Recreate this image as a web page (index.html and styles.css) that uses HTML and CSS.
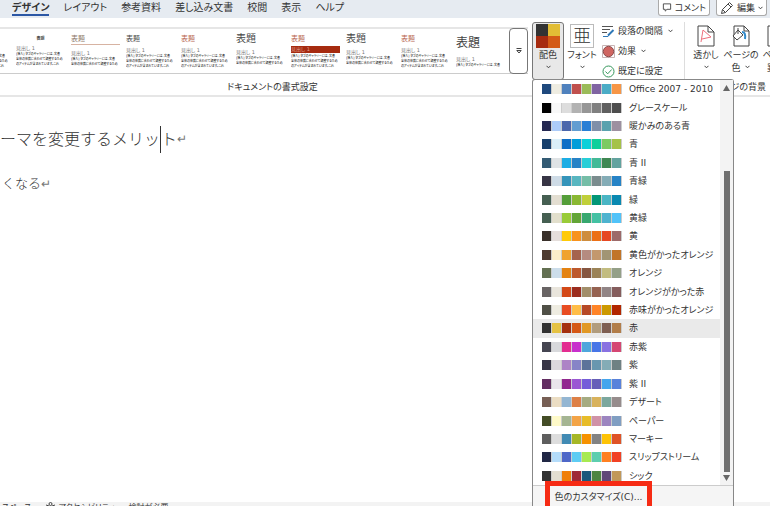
FILE: index.html
```html
<!DOCTYPE html>
<html lang="ja">
<head>
<meta charset="utf-8">
<title>デザイン</title>
<link rel="stylesheet" href="styles.css">
</head>
<body>
<header class="tabs">
  <nav class="tab-list">
    <a class="tab active" href="#design">デザイン</a>
    <a class="tab" href="#layout">レイアウト</a>
    <a class="tab" href="#references">参考資料</a>
    <a class="tab" href="#mailings">差し込み文書</a>
    <a class="tab" href="#review">校閲</a>
    <a class="tab" href="#view">表示</a>
    <a class="tab" href="#help">ヘルプ</a>
  </nav>
  <div class="actions">
    <button class="action" type="button">
      <svg width="10" height="11" viewBox="0 0 11 11"><path d="M1.500 1.500h8v6h-4l-2 2v-2h-2z"/></svg>コメント
    </button>
    <button class="action" type="button">
      <svg width="14" height="14" viewBox="0 0 14 14"><path d="M1.500 12.500l1-4 7-7 3 3-7 7zM8 3l3 3M2.500 8.500l3 3"/></svg>編集
      <svg class="chev" width="5" height="4" viewBox="0 0 5 4"><path d="M.5.8l2 2 2-2"/></svg>
    </button>
  </div>
</header>

<section class="ribbon">
  <div class="group formats">
    <div class="gallery">
      <div class="styles" id="styles"></div>
      <button class="more" type="button" aria-label="その他">
        <svg width="6" height="6" viewBox="0 0 6 6"><path d="M.5.5h5M.8 2.500h4.400L3 5z"/></svg>
      </button>
    </div>
    <button class="big pressed" type="button">
      <svg width="24" height="24" viewBox="0 0 24 24"><g stroke="none"><path fill="#333" d="M0 0h12v12H0z"/><path fill="#e2bd35" d="M12 0h12v12H12z"/><path fill="#a62b10" d="M0 12h12v12H0z"/><path fill="#d35a16" d="M12 12h12v12H12z"/></g></svg>
      <span>配色</span>
      <svg class="chev" width="5" height="4" viewBox="0 0 5 4"><path d="M.5.8l2 2 2-2"/></svg>
    </button>
    <button class="big" type="button">
      <span class="font-icon">亜</span>
      <span>フォント</span>
      <svg class="chev" width="5" height="4" viewBox="0 0 5 4"><path d="M.5.8l2 2 2-2"/></svg>
    </button>
    <div class="stack">
      <button class="small" type="button">
        <svg width="13" height="13" viewBox="0 0 13 13"><path stroke="#555" d="M0 1.500h11M0 4.500h8M0 7.500h5"/><path stroke="#2f78b7" stroke-width="2" d="M11.500 5L6 10.500"/><path stroke="#2f78b7" d="M1 11.500h5l1-2"/></svg>段落の間隔
        <svg class="chev" width="5" height="4" viewBox="0 0 5 4"><path d="M.5.8l2 2 2-2"/></svg>
      </button>
      <button class="small" type="button">
        <svg width="13" height="13" viewBox="0 0 13 13"><path stroke="#c9b5b5" d="M.5.5h12v12H.5z"/><circle cx="6.500" cy="6.500" r="5.200" fill="#cf6560" stroke="#8b4d4d"/></svg>効果
        <svg class="chev" width="5" height="4" viewBox="0 0 5 4"><path d="M.5.8l2 2 2-2"/></svg>
      </button>
      <button class="small" type="button">
        <svg width="13" height="13" viewBox="0 0 13 13"><g stroke="#35975b"><circle cx="6.500" cy="6.500" r="5.500"/><path d="M3.500 6.500l2.200 2.300 4-4.300"/></g></svg>既定に設定
      </button>
    </div>
    <div class="group-label">ドキュメントの書式設定</div>
  </div>
  <div class="group background">
    <button class="big" type="button">
      <svg width="18" height="24" viewBox="0 0 18 24"><path fill="#fff" d="M1 2h10l6 6v14H1z"/><path d="M11 2v6h6"/><path stroke="#ee6f7c" d="M4 18L6 6l8 7-9 2"/></svg>
      <span>透かし</span>
      <svg class="chev" width="5" height="4" viewBox="0 0 5 4"><path d="M.5.8l2 2 2-2"/></svg>
    </button>
    <button class="big" type="button">
      <svg width="18" height="24" viewBox="0 0 18 24"><path fill="#fff" d="M2 2h10l5 5v15H2z"/><path d="M12 2v5h5"/><path stroke="#338bcb" stroke-width="2" d="M10 8q4 0 3 7"/><path fill="#fff" d="M6 6l5 5-6 5-4-4zM6 10V4"/></svg>
      <span>ページの</span>
      <span class="second">色 <svg class="chev" width="5" height="4" viewBox="0 0 5 4"><path d="M.5.8l2 2 2-2"/></svg></span>
    </button>
    <button class="big" type="button">
      <svg width="18" height="24" viewBox="0 0 18 24"><path fill="#fff" d="M1 2h10l6 6v14H1z"/></svg>
      <span>ページ</span>
      <span class="second">罫線</span>
    </button>
    <div class="group-label">ページの背景</div>
  </div>
</section>

<main class="document">
  <h1>ーマを変更するメリッ<span class="caret"></span>ト<span class="mark">↵</span></h1>
  <p>くなる<span class="mark">↵</span></p>
</main>

<footer class="status">
  <span>スペース</span>
  <span class="access"><svg width="11" height="11" viewBox="0 0 11 11"><circle cx="5.500" cy="2" r="1.500"/><path d="M1 3l3 1v3l-1 3.500M10 3L7 4v3l1 3.500"/></svg>アクセシビリティ</span>
  <span>検討が必要</span>
</footer>

<div class="menu">
  <div class="menu-body">
    <div class="schemes" id="schemes"></div>
    <div class="scroll">
      <svg width="7" height="6" viewBox="0 0 7 6"><path d="M3.500 0L7 6H0z"/></svg>
      <div class="track"><div class="thumb"></div></div>
      <svg width="7" height="6" viewBox="0 0 7 6"><path d="M0 0h7L3.500 6z"/></svg>
    </div>
  </div>
  <div class="menu-foot"><button class="customize" type="button">色のカスタマイズ(C)...</button></div>
</div>
<script src="script.js"></script>
</body>
</html>
```
FILE: styles.css
```css
* { box-sizing: border-box; }
body {
  margin: 0;
  height: 100vh;
  overflow: hidden;
  display: flex;
  flex-direction: column;
  position: relative;
  background: #fff;
  color: #333;
  font: 9px/14px "DejaVu Sans", "Noto Sans CJK JP", sans-serif;
  font-feature-settings: "palt";
}
button {
  font: inherit;
  font-feature-settings: inherit;
  color: inherit;
  background: none;
  border: 0;
  padding: 0;
  margin: 0;
  white-space: nowrap;
}
svg { fill: none; stroke: #444; flex: none; }

.tabs {
  height: 18px;
  flex: none;
  display: flex;
  justify-content: space-between;
  background: #e6ebf1;
}
.tab-list { display: flex; gap: 14px; padding-left: 12px; }
.tab {
  height: 16px;
  line-height: 15px;
  font-size: 10px;
  color: #333;
  text-decoration: none;
  white-space: nowrap;
}
.tab.active { font-weight: 700; border-bottom: 2px solid #2b57a5; }
.actions { display: flex; gap: 6px; padding-right: 3px; }
.action {
  height: 16px;
  display: flex;
  align-items: center;
  gap: 3px;
  padding: 0 3px;
  background: #fff;
  border: 1px solid #aaa;
  border-top: 0;
  border-radius: 0 0 3px 3px;
}

.ribbon {
  height: 79px;
  flex: none;
  display: flex;
  border-bottom: 2px solid #e6e6e6;
}
.group {
  position: relative;
  display: flex;
  align-items: flex-start;
  padding: 4px 0 16px;
}
.formats { flex: 1; min-width: 0; }
.formats::after {
  content: "";
  align-self: stretch;
  width: 1px;
  background: #ddd;
}
.group-label {
  position: absolute;
  bottom: 1px;
  left: 0;
  right: 0;
  text-align: center;
  white-space: nowrap;
}
.formats .group-label { right: 140px; }
.background { width: 85px; padding-left: 5px; overflow: hidden; gap: 3px; }
.background .group-label { right: 4px; text-align: right; }

.gallery {
  flex: 1;
  min-width: 0;
  height: 47px;
  margin: 5px 4px 0 0;
  display: flex;
  border-top: 2px solid #e6e6e6;
  border-bottom: 1px solid #ccc;
}
.styles { flex: 1; min-width: 0; display: flex; gap: 6px; overflow: hidden; margin-left: -39px; }
.style {
  width: 49px;
  flex: none;
  height: 42px;
  overflow: hidden;
  padding-top: 5px;
  font-size: 5px;
  line-height: 6px;
  color: #444;
}
.style b { display: block; font-weight: 400; font-size: 7px; line-height: 10px; margin-bottom: 3px; }
.style i { display: block; font-style: normal; line-height: 7px; color: #777; }
.style p { margin: 0; font-size: 3px; line-height: 5px; color: #000; }
.style.centered b { font-size: 4px; font-weight: 700; text-align: center; margin-bottom: 1px; }
.style.ruled b { border-bottom: 1px solid #d7b3a2; color: #8c7769; margin-bottom: 5px; }
.style.red b { color: #b86550; }
.style.large b { font-size: 10px; margin-bottom: 5px; }
.style.bar b { color: #b86550; margin-bottom: 2px; }
.style.bar i { background: #a62b10; color: #e0a090; margin-bottom: 1px; }
.style.huge b { font-size: 12px; line-height: 18px; margin-bottom: 4px; }
.more {
  width: 19px;
  height: 46px;
  flex: none;
  margin-top: -1px;
  border: 1px solid #777;
  border-radius: 4px;
  background: #fff;
}

.big {
  width: 32px;
  height: 58px;
  flex: none;
  display: flex;
  flex-direction: column;
  align-items: center;
  padding-top: 2px;
}
.big > span { line-height: 13px; }
.big > svg:first-child { margin-bottom: 1px; }
.big .chev { margin-top: 3px; }
.big .second .chev { margin: 0 0 2px 2px; }
.pressed { padding-top: 1px; border: 1px solid #777; border-radius: 3px; background: #e8e8e8; margin-right: 2px; }
.big .font-icon {
  width: 24px;
  height: 24px;
  border: 1px solid #bbb;
  font-size: 18px;
  line-height: 22px;
  font-weight: 300;
  text-align: center;
  margin-bottom: 1px;
}
.stack { width: 82px; flex: none; margin-left: 4px; display: flex; flex-direction: column; gap: 6px; padding-top: 2px; }
.small { height: 14px; display: flex; align-items: center; gap: 3px; }
.small .chev { margin-left: 2px; }

.document { flex: 1; padding: 29px 0 0; }
.document h1 {
  margin: 0;
  font-size: 16px;
  line-height: 27px;
  font-weight: 300;
  font-feature-settings: normal;
  display: flex;
  align-items: center;
}
.document p { margin: 19px 0 0 2px; font-size: 13px; line-height: 24px; font-weight: 300; font-feature-settings: normal; }
.caret { width: 1px; height: 27px; background: #333; }
.mark { font-size: 12px; color: #777; }

.status {
  height: 4px;
  flex: none;
  overflow: hidden;
  display: flex;
  gap: 14px;
  padding-left: 2px;
  background: #f3f3f3;
  font-size: 8px;
  line-height: 12px;
}
.access { display: flex; gap: 2px; }

.menu {
  position: absolute;
  left: calc(100% - 238px);
  top: 79px;
  bottom: 0;
  width: 202px;
  display: flex;
  flex-direction: column;
  background: #fff;
  border: 1px solid #888;
  border-bottom: 0;
  border-radius: 3px 3px 0 0;
}
.menu-body { flex: 1; display: flex; min-height: 0; }
.schemes { flex: 1; min-width: 0; display: flex; flex-direction: column; }
.scheme {
  flex: 1;
  min-height: 0;
  display: flex;
  align-items: center;
  gap: 7px;
  padding-left: 9px;
  text-align: left;
}
.scheme.selected { background: #eaeaea; }
.swatches { display: flex; flex: none; width: 80px; height: 10px; }
.swatch { flex: 1; border-right: 1px solid #ccc; }
.scroll {
  width: 13px;
  flex: none;
  display: flex;
  flex-direction: column;
  align-items: center;
  padding: 5px 0 4px;
  background: #f3f3f3;
}
.scroll svg { fill: #666; stroke: none; }
.track { flex: 1; display: flex; flex-direction: column; justify-content: flex-end; padding-bottom: 3px; }
.thumb { width: 6px; height: 79%; background: #707070; }
.menu-foot { height: 21px; flex: none; border-top: 1px solid #ccc; background: #f5f5f5; }
.customize {
  position: absolute;
  left: 12px;
  bottom: -5px;
  width: 107px;
  height: 30px;
  padding-top: 2px;
  border: 5px solid #f62b14;
  background: #f5f5f5;
}
```
FILE: script.js
```js
const schemes = [
  ["Office 2007 - 2010", "#1f497d #eeece1 #4f81bd #c0504d #9bbb59 #8064a2 #4bacc6 #f79646"],
  ["グレースケール", "#000000 #f8f8f8 #dddddd #b2b2b2 #969696 #808080 #5f5f5f #4d4d4d"],
  ["暖かみのある青", "#242852 #accbf9 #4a66ac #629dd1 #297fd5 #7f8fa9 #5aa2ae #9d90a0"],
  ["青", "#17406d #dbeff9 #0f6fc6 #009dd9 #0bd0d9 #10cf9b #7cca62 #a5c249"],
  ["青 II", "#335b74 #dfe3e5 #1cade4 #2683c6 #27ced7 #42ba97 #3e8853 #62a39f"],
  ["青緑", "#373545 #cedbe6 #3494ba #58b6c0 #75bda7 #7a8c8e #84acb6 #2683c6"],
  ["緑", "#455f51 #e3ded1 #549e39 #8ab833 #c0cf3a #029676 #4ab5c4 #0989b1"],
  ["黄緑", "#455f51 #e2dfcc #99cb38 #63a537 #37a76f #44c1a3 #4eb3cf #51c3f9"],
  ["黄", "#39302a #e5dedb #ffca08 #f8931d #ce8d3e #ec7016 #e64823 #9c6a6a"],
  ["黄色がかったオレンジ", "#4e3b30 #fbeec9 #f0a22e #a5644e #b58b80 #c3986d #a19574 #c17529"],
  ["オレンジ", "#637052 #ccddea #e48312 #bd582c #865640 #9b8357 #c2bc80 #94a088"],
  ["オレンジがかった赤", "#696464 #e9e5dc #d34817 #9b2d1f #a28e6a #956251 #918485 #855d5d"],
  ["赤味がかったオレンジ", "#505046 #eeece1 #e84c22 #ffbd47 #b64926 #ff8427 #cc9900 #b22600"],
  ["赤", "#323232 #e5c243 #a5300f #d55816 #e19825 #b19c7d #7f5f52 #b27d49"],
  ["赤紫", "#454551 #d8d9dc #e32d91 #c830cc #4ea6dc #4775e7 #8971e1 #d54773"],
  ["紫", "#373545 #dcd8dc #ad84c6 #8784c7 #5d739a #6997af #84acb6 #6f8183"],
  ["紫 II", "#632e62 #eae5eb #92278f #9b57d3 #755dd9 #665eb8 #45a5ed #5982db"],
  ["デザート", "#775f55 #ebddc3 #94b6d2 #dd8047 #a5ab81 #d8b25c #7ba79d #968c8c"],
  ["ペーパー", "#444d26 #fefac9 #a5b592 #f3a447 #e7bc29 #d092a7 #9c85c0 #809ec2"],
  ["マーキー", "#5e5e5e #dddddd #418ab3 #a6b727 #f69200 #838383 #fec306 #df5327"],
  ["スリップストリーム", "#212745 #b4dcfa #4e67c8 #5eccf3 #a7ea52 #5dceaf #ff8021 #f14124"],
  ["シック", "#323232 #e3ded1 #f07f09 #9f2936 #1b587c #4e8542 #604878 #c19859"]
];
document.getElementById("schemes").innerHTML = schemes.map(([name, colors]) =>
  `<button type="button" class="scheme${name === "赤" ? " selected" : ""}"><span class="swatches">${
    colors.split(" ").map(c => `<span class="swatch" style="background:${c}"></span>`).join("")
  }</span>${name}</button>`).join("");

const line1 = "[挿入] タブのギャラリーには、文書";
const line2 = "全体の体裁に合わせて調整するため";
const line3 = "のアイテムが含まれています。これ";
const previews = [
  ["", 3], ["centered", 3], ["ruled", 2], ["", 3], ["red", 3],
  ["large", 2], ["bar", 3], ["large", 2], ["red", 3], ["huge", 1]
];
document.getElementById("styles").innerHTML = previews.map(([kind, lines]) =>
  `<div class="style ${kind}"><b>表題</b><i>見出し 1</i><p>${
    [line1, line2, line3].slice(0, lines).join("<br>")
  }</p></div>`).join("");
```
